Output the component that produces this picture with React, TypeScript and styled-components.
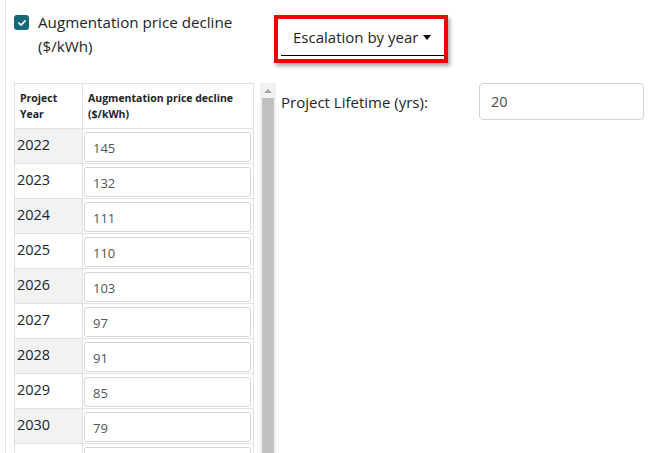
import { FC } from "react";
import styled, { createGlobalStyle } from "styled-components";

type Row = {
  year: number;
  price: number;
};

const rows: Row[] = [
  { year: 2022, price: 145 },
  { year: 2023, price: 132 },
  { year: 2024, price: 111 },
  { year: 2025, price: 110 },
  { year: 2026, price: 103 },
  { year: 2027, price: 97 },
  { year: 2028, price: 91 },
  { year: 2029, price: 85 },
  { year: 2030, price: 79 },
  { year: 2031, price: 74 },
];

const App: FC = () => {
  return (
    <>
      <GlobalStyle />
      <Page>
        <TopRow>
          <CheckLabel>
            <CheckBox>
              <svg width="10" height="10" viewBox="0 0 10 10">
                <path d="M2 5.2 L4.1 7.2 L8 3" stroke="#fff" strokeWidth="1.8" fill="none" strokeLinecap="round" strokeLinejoin="round" />
              </svg>
            </CheckBox>
            <LabelText>Augmentation price decline ($/kWh)</LabelText>
          </CheckLabel>
          <Highlight>
            <DropdownToggle>Escalation by year</DropdownToggle>
          </Highlight>
        </TopRow>
        <BodyRow>
          <TablePane>
            <Table>
              <colgroup>
                <col style={{ width: 68 }} />
                <col />
              </colgroup>
              <thead>
                <HeadRow>
                  <Th>Project Year</Th>
                  <Th>Augmentation price decline ($/kWh)</Th>
                </HeadRow>
              </thead>
              <tbody>
                {rows.map((row, i) => (
                  <BodyRowTr key={row.year}>
                    <YearCell $shaded={i % 2 === 0}>{row.year}</YearCell>
                    <InputCell>
                      <CellInput defaultValue={row.price} />
                    </InputCell>
                  </BodyRowTr>
                ))}
              </tbody>
            </Table>
            <ScrollTrack>
              <ScrollArrow />
              <ScrollThumb />
            </ScrollTrack>
          </TablePane>
          <FormRow>
            <FormLabel>Project Lifetime (yrs):</FormLabel>
            <FormInput defaultValue="20" />
          </FormRow>
        </BodyRow>
      </Page>
    </>
  );
};

const GlobalStyle = createGlobalStyle`
  body {
    margin: 0;
    background: #fff;
    font-family: "Open Sans", "Noto Sans", sans-serif;
    color: #212529;
    overflow: hidden;
  }
`;

const Page = styled.div`
  margin-left: 5px;
  height: 453px;
  border-left: 1px solid #e2e2e2;
  padding-left: 8px;
  overflow: hidden;
`;

const TopRow = styled.div`
  display: flex;
  align-items: flex-start;
  padding-top: 10px;
`;

const CheckLabel = styled.label`
  display: flex;
  align-items: flex-start;
  width: 260px;
  gap: 9px;
`;

const CheckBox = styled.span`
  flex: none;
  width: 15px;
  height: 15px;
  margin-top: 5px;
  border-radius: 3px;
  background: #17697a;
  display: grid;
  place-items: center;
`;

const LabelText = styled.span`
  width: 210px;
  font-size: 15.2px;
  line-height: 24px;
  color: #212529;
`;

const Highlight = styled.div`
  margin-top: 5px;
  border: 4px solid #f00000;
  box-shadow: 2px 3px 4px rgba(0, 0, 0, 0.35);
  background: #fff;
  padding: 0 0 3px 3px;
`;

const DropdownToggle = styled.button`
  display: flex;
  align-items: center;
  width: 163px;
  height: 37px;
  padding: 0 0 0 12px;
  border: none;
  border-bottom: 1.5px solid #000;
  background: #fff;
  font-family: "Open Sans", "Noto Sans", sans-serif;
  font-size: 15px;
  color: #212529;

  &::after {
    content: "";
    margin-left: 5px;
    border-top: 5px solid #000;
    border-left: 4.5px solid transparent;
    border-right: 4.5px solid transparent;
  }
`;

const BodyRow = styled.div`
  display: flex;
  align-items: flex-start;
  margin-top: 20px;
`;

const TablePane = styled.div`
  display: flex;
  gap: 6px;
  height: 380px;
  overflow: hidden;
`;

const Table = styled.table`
  width: 240px;
  table-layout: fixed;
  border-collapse: collapse;
  border: 1px solid #dee2e6;
  align-self: flex-start;
`;

const HeadRow = styled.tr`
  height: 45px;
`;

const BodyRowTr = styled.tr`
  height: 35px;
`;

const Th = styled.th`
  padding: 0 4px 0 5px;
  border: 1px solid #dee2e6;
  text-align: left;
  vertical-align: middle;
  font-size: 10.5px;
  line-height: 16px;
  font-weight: 700;
  color: #212529;
`;

const YearCell = styled.td<{ $shaded: boolean }>`
  padding: 0 2px 2px;
  border: 1px solid #dee2e6;
  background: ${(p) => (p.$shaded ? "#f2f2f2" : "#fff")};
  font-size: 14.5px;
  line-height: 20px;
  vertical-align: middle;
`;

const InputCell = styled.td`
  padding: 2px 2px 0 1px;
  border: 1px solid #dee2e6;
  vertical-align: middle;
`;

const CellInput = styled.input`
  display: block;
  box-sizing: border-box;
  width: 100%;
  height: 30px;
  padding: 1px 8px 0;
  border: 1px solid #d3d6da;
  border-radius: 3px;
  background: #fff;
  font-family: "Open Sans", "Noto Sans", sans-serif;
  font-size: 13px;
  color: #4d5660;
  outline: none;
`;

const ScrollTrack = styled.div`
  width: 16px;
  background: #f1f1f1;
  display: flex;
  flex-direction: column;
  align-items: center;
`;

const ScrollArrow = styled.div`
  margin: 6px 0 5px;
  border-bottom: 4px solid #a3a3a3;
  border-left: 4px solid transparent;
  border-right: 4px solid transparent;
`;

const ScrollThumb = styled.div`
  width: 12px;
  flex: 1;
  background: #c1c1c1;
`;

const FormRow = styled.div`
  display: flex;
  align-items: center;
  margin-left: 5px;
  height: 37px;
`;

const FormLabel = styled.span`
  width: 198px;
  font-size: 15px;
  color: #212529;
`;

const FormInput = styled.input`
  box-sizing: border-box;
  width: 165px;
  height: 37px;
  padding: 0 11px;
  border: 1px solid #ced4da;
  border-radius: 4px;
  font-family: "Open Sans", "Noto Sans", sans-serif;
  font-size: 14.5px;
  color: #495057;
  outline: none;
`;

export default App;
